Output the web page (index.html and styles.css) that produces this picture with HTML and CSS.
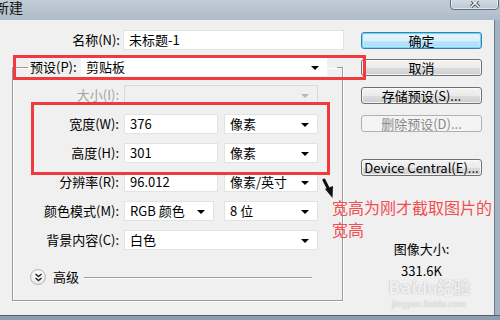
FILE: index.html
```html
<!DOCTYPE html>
<html>
<head>
<meta charset="utf-8">
<link rel="stylesheet" href="styles.css">
</head>
<body>
<div class="win">
  <div class="titlebar">
    <span class="title">新建</span>
    <div class="close"><svg width="12" height="7" viewBox="0 0 12 7"><path d="M2 -2 L10 6 M10 -2 L2 6" stroke="#3b4756" stroke-width="3.2"/><path d="M2 -2 L10 6 M10 -2 L2 6" stroke="#f4f6f8" stroke-width="1.6"/></svg></div>
  </div>
  <div class="client">
    <div class="left">
      <div class="name-row">
        <span class="lbl name-lbl">名称(N):</span>
        <div class="field name-field">未标题-1</div>
      </div>
      <fieldset class="group">
        <legend class="legend">
          <span class="lbl preset-lbl">预设(P):</span>
          <div class="field select preset-field">剪贴板<span class="arrow"></span></div>
        </legend>
        <div class="row">
          <span class="lbl disabled">大小(I):</span>
          <div class="field select full off"><span class="arrow"></span></div>
        </div>
        <div class="row">
          <span class="lbl">宽度(W):</span>
          <div class="field half">376</div>
          <div class="field select half">像素<span class="arrow"></span></div>
        </div>
        <div class="row">
          <span class="lbl">高度(H):</span>
          <div class="field half">301</div>
          <div class="field select half">像素<span class="arrow"></span></div>
        </div>
        <div class="row">
          <span class="lbl">分辨率(R):</span>
          <div class="field half">96.012</div>
          <div class="field select half">像素/英寸<span class="arrow"></span></div>
        </div>
        <div class="row">
          <span class="lbl">颜色模式(M):</span>
          <div class="field select mode">RGB 颜色<span class="arrow"></span></div>
          <div class="field select half bits">8 位<span class="arrow"></span></div>
        </div>
        <div class="row">
          <span class="lbl">背景内容(C):</span>
          <div class="field select full">白色<span class="arrow"></span></div>
        </div>
        <div class="adv">
          <span class="adv-btn"><svg width="9" height="9" viewBox="0 0 9 9"><path d="M1.5 1 L4.5 3.6 L7.5 1 M1.5 5 L4.5 7.6 L7.5 5" fill="none" stroke="#222" stroke-width="1.4"/></svg></span>
          <span class="adv-text">高级</span>
          <span class="adv-line"></span>
        </div>
      </fieldset>
    </div>
    <div class="right">
      <div class="btn default">确定</div>
      <div class="btn">取消</div>
      <div class="btn">存储预设(S)...</div>
      <div class="btn off">删除预设(D)...</div>
      <div class="btn dc">Device Central(E)...</div>
      <div class="info">
        <div class="info-lbl">图像大小:</div>
        <div class="info-val">331.6K</div>
      </div>
    </div>
  </div>
  <div class="frame-bottom"></div>

  <div class="mark mark1"></div>
  <div class="mark mark2"></div>
  <div class="note">宽高为刚才截取图片的<br>宽高</div>
  <svg class="pointer" width="16" height="24" viewBox="0 0 16 24"><path d="M2 2 L6.5 11" stroke="#111" stroke-width="3" stroke-linecap="round"/><path d="M3 11 L11 8 L10.5 20 Z" fill="#111"/></svg>
  <div class="wm">
    <div class="wm-big">Bai<span class="wm-du">du</span>经验</div>
    <div class="wm-small">jingyan.baidu.com</div>
  </div>
</div>
</body>
</html>
```
FILE: styles.css
```css
* { box-sizing: border-box; }
html, body { margin: 0; padding: 0; }
body {
  width: 500px; height: 320px; overflow: hidden;
  font-family: "Noto Sans CJK SC", "Noto Sans", sans-serif;
  font-size: 13px; color: #000;
}
.win {
  position: relative; width: 500px; height: 320px;
  background: #a3b2c2; overflow: hidden;
  display: flex; flex-direction: column;
}
.titlebar {
  height: 20px; flex: none; position: relative;
  background: linear-gradient(#c3ccd6, #aebbc9);
}
.title {
  display: block; font-size: 14px; line-height: 14px;
  text-indent: -5px; color: #111;
}
.close {
  position: absolute; left: 450px; top: -3px; width: 49px; height: 13px;
  border: 1px solid #5f6d7c; border-radius: 0 0 4px 4px;
  background: linear-gradient(#d6dde5, #bcc7d3);
  box-shadow: inset 0 0 0 1px rgba(255,255,255,.55);
  display: flex; justify-content: center; align-items: flex-start;
}
.close svg { margin-top: 3px; }
.client {
  width: 495px; height: 295px; flex: none; background: #f0f0f0;
  display: flex; overflow: hidden;
  border-right: 1px solid #6d7d8e;
}
.left { width: 361px; flex: none; }
.name-row { display: flex; align-items: center; margin-top: 10px; height: 20px; }
.lbl { white-space: nowrap; line-height: 20px; }
.name-lbl { width: 120px; text-align: right; margin-right: 3px; }
.field {
  height: 20px; line-height: 18px; background: #fff;
  border: 1px solid #e2e3e5; padding: 0 5px; position: relative;
  white-space: nowrap;
}
.name-field { width: 221px; }
.group {
  margin: 7px 0 0 12px; padding: 0; width: 331px; height: 244px;
  border: 1px solid #9c9c9c; border-radius: 0;
  box-shadow: 1px 1px 0 #fff, inset 1px 1px 0 #fff;
  min-width: 0;
}
.legend {
  display: flex; align-items: center; padding: 0 9px 0 2px; margin-left: 15px;
}
.preset-lbl { width: 50px; }
.preset-field { width: 248px; border-color: #f2f2f2; }
.select .arrow {
  position: absolute; right: 8px; top: 8px;
  width: 0; height: 0;
  border-left: 4px solid transparent; border-right: 4px solid transparent;
  border-top: 4px solid #000;
}
.row { display: flex; align-items: center; height: 20px; margin-top: 9px; }
.row:first-of-type { margin-top: 8px; }
.row .lbl { width: 106px; text-align: right; margin-right: 5px; }
.disabled { color: #a3a3a3; }
.full { width: 194px; }
.half { width: 94px; }
.half + .half { margin-left: 6px; }
.mode { width: 90px; }
.bits { margin-left: 10px; }
.off { background: #f0f0f0; border-color: #d9d9d9; }
.off .arrow { border-top-color: #b8b8b8; }
.adv { display: flex; align-items: center; margin-top: 18px; height: 18px; padding-left: 17px; }
.adv-btn {
  width: 16px; height: 16px; border-radius: 50%;
  border: 1px solid #b5b5b5;
  background: radial-gradient(circle at 50% 35%, #ffffff, #e2e2e2);
  display: flex; align-items: center; justify-content: center;
}
.adv-text { margin-left: 7px; line-height: 18px; }
.adv-line { margin-left: 5px; width: 228px; height: 1px; background: #9c9c9c; box-shadow: 0 1px 0 #fff; }
.right { width: 121px; flex: none; padding-top: 12px; display: flex; flex-direction: column; }
.btn {
  height: 17px; line-height: 15px; text-align: center;
  border: 1px solid #707070; border-radius: 3px;
  background: linear-gradient(#f3f3f3 0%, #ebebeb 50%, #dddddd 51%, #cfcfcf 100%);
  box-shadow: inset 0 0 0 1px rgba(255,255,255,.7);
  margin-bottom: 11px; white-space: nowrap;
}
.btn.default {
  border-color: #3c7fb1;
  background: linear-gradient(#eaf6fd 0%, #d9f0fc 50%, #bee6fd 51%, #a7d9f5 100%);
  box-shadow: inset 0 0 0 1px #6fd6f8, inset 0 0 0 2px rgba(200,240,255,.6);
  margin-bottom: 10px;
}
.btn.off {
  color: #8a8a8a; border-color: #adb2b5; background: #f4f4f4; box-shadow: none;
}
.btn.dc { margin-top: 16px; }
.info { text-align: center; margin-top: 54px; }
.info-lbl { line-height: 16px; }
.info-val { line-height: 16px; margin-top: 6px; }
.frame-bottom {
  height: 5px; flex: none; border-top: 1px solid #4f5f71; background: #8e9eb1;
}
.mark { position: absolute; border: 3px solid #ef3a3e; }
.mark1 { left: 13px; top: 55px; width: 353px; height: 25px; }
.mark2 { left: 31px; top: 102px; width: 299px; height: 73px; }
.note {
  position: absolute; left: 332px; top: 196px;
  color: #f24e50; font-size: 16px; line-height: 22px; white-space: nowrap;
}
.pointer { position: absolute; left: 322px; top: 178px; }
.wm {
  position: absolute; left: 384px; top: 277px; width: 90px; text-align: center;
  color: rgba(255,255,255,.85);
  text-shadow: 0 0 1px rgba(130,130,130,.8);
  white-space: nowrap;
}
.wm-big { font-family: "DejaVu Sans", "Noto Sans CJK SC", sans-serif; font-size: 17px; font-weight: bold; line-height: 22px; letter-spacing: -0.5px; }
.wm-du { font-size: 15px; }
.wm-small { font-family: "DejaVu Sans", sans-serif; font-size: 8px; line-height: 10px; }
```
